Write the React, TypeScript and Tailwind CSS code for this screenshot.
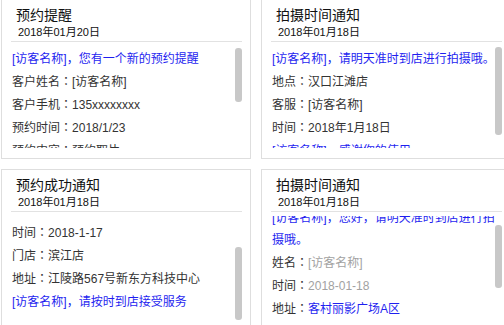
type Tone = "blue" | "gray";
type Seg = { t: string; tone?: Tone };
type Notice = {
  title: string;
  date: string;
  lines: Seg[][];
  offset: number; // how far the body is scrolled
  thumbTop: number;
  thumbH: number;
};

const notices: Notice[] = [
  {
    title: "预约提醒",
    date: "2018年01月20日",
    lines: [
      [{ t: "[访客名称]，您有一个新的预约提醒", tone: "blue" }],
      [{ t: "客户姓名：[访客名称]" }],
      [{ t: "客户手机：135xxxxxxxx" }],
      [{ t: "预约时间：2018/1/23" }],
      [{ t: "预约内容：预约取片" }],
      [{ t: "[访客名称]，感谢你的使用", tone: "blue" }],
    ],
    offset: 0,
    thumbTop: 2,
    thumbH: 54,
  },
  {
    title: "拍摄时间通知",
    date: "2018年01月18日",
    lines: [
      [{ t: "[访客名称]，请明天准时到店进行拍摄哦。", tone: "blue" }],
      [{ t: "地点：汉口江滩店" }],
      [{ t: "客服：[访客名称]" }],
      [{ t: "时间：2018年1月18日" }],
      [{ t: "[访客名称]，感谢你的使用", tone: "blue" }],
    ],
    offset: 0,
    thumbTop: 1,
    thumbH: 88,
  },
  {
    title: "预约成功通知",
    date: "2018年01月18日",
    lines: [
      [{ t: "时间：2018-1-17" }],
      [{ t: "门店：滨江店" }],
      [{ t: "地址：江陵路567号新东方科技中心" }],
      [{ t: "[访客名称]，请按时到店接受服务", tone: "blue" }],
    ],
    offset: 4,
    thumbTop: 31,
    thumbH: 73,
  },
  {
    title: "拍摄时间通知",
    date: "2018年01月18日",
    lines: [
      [{ t: "[访客名称]，您好，请明天准时到店进行拍\n摄哦。", tone: "blue" }],
      [{ t: "姓名：" }, { t: "[访客名称]", tone: "gray" }],
      [{ t: "时间：" }, { t: "2018-01-18", tone: "gray" }],
      [{ t: "地址：" }, { t: "客村丽影广场A区", tone: "blue" }],
    ],
    offset: -11,
    thumbTop: 9,
    thumbH: 63,
  },
];

const toneClass = (tone?: Tone) =>
  tone === "blue" ? "text-[#1f1ff0]" : tone === "gray" ? "text-[#a2a2a2]" : "";

// the SC face puts the full-width colon at the left of its cell, the reference centres it.
// Liberation Sans stays first so the line box keeps the same metrics.
const withColon = (text: string) =>
  text.split("：").flatMap((part, i) =>
    i === 0
      ? [part]
      : [
          <span key={i} className="font-['Liberation_Sans','Noto_Sans_CJK_JP',sans-serif]">
            ：
          </span>,
          part,
        ]
  );

function NoticeCard({ n }: { n: Notice }) {
  return (
    <div className="flex h-[160px] w-[250px] flex-col border border-[#dedede] bg-white">
      {/* header */}
      <div className="pl-[14px] pt-[6px]">
        <h3 className="text-[14px] leading-[18px] text-[#111]">{n.title}</h3>
        <p className="ml-[2px] text-[11px] leading-[16px] text-[#111]">{n.date}</p>
      </div>
      <div className="ml-[9px] mr-[8px] mt-px h-px bg-[#e2e2e2]" />

      {/* body + scrollbar */}
      <div className="mt-[4px] flex h-[102px] pl-[10px] pr-[8px]">
        <div className="min-w-0 flex-1 overflow-hidden pt-[2px] text-[12px] text-[#333]">
          <div style={{ marginTop: n.offset }}>
            {n.lines.map((line, i) => (
              <p key={i} className="mb-px whitespace-pre leading-[22px]">
                {line.map((s, j) => (
                  <span key={j} className={toneClass(s.tone)}>
                    {withColon(s.t)}
                  </span>
                ))}
              </p>
            ))}
          </div>
        </div>
        <div className="w-[7px] shrink-0">
          <div
            className="rounded-[3px] bg-[#c8c8c8]"
            style={{ marginTop: n.thumbTop, height: n.thumbH }}
          />
        </div>
      </div>
    </div>
  );
}

export default function App() {
  return (
    <div
      className="h-[325px] w-[504px] overflow-hidden bg-white"
      style={{ fontFamily: '"Liberation Sans", "Noto Sans CJK SC", sans-serif' }}
    >
      <div className="-mt-px ml-px grid w-max grid-cols-[250px_250px] gap-[10px]">
        {notices.map((n, i) => (
          <NoticeCard key={i} n={n} />
        ))}
      </div>
    </div>
  );
}
